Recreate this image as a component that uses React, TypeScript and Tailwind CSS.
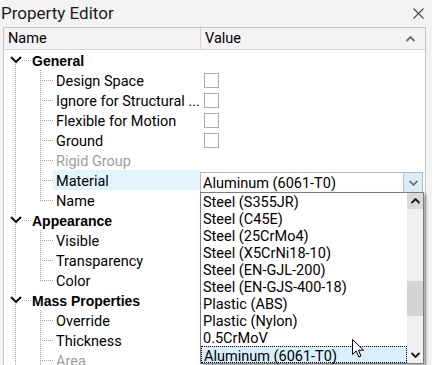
import type { ReactNode } from "react";

type Row = {
  kind: "group" | "child";
  label: string;
  first?: boolean;
  last?: boolean;
  check?: boolean;
  disabled?: boolean;
  combo?: boolean;
};

const rows: Row[] = [
  { kind: "group", label: "General", first: true },
  { kind: "child", label: "Design Space", check: true },
  { kind: "child", label: "Ignore for Structural ...", check: true },
  { kind: "child", label: "Flexible for Motion", check: true },
  { kind: "child", label: "Ground", check: true },
  { kind: "child", label: "Rigid Group", disabled: true },
  { kind: "child", label: "Material", combo: true },
  { kind: "child", label: "Name", last: true },
  { kind: "group", label: "Appearance" },
  { kind: "child", label: "Visible" },
  { kind: "child", label: "Transparency" },
  { kind: "child", label: "Color", last: true },
  { kind: "group", label: "Mass Properties" },
  { kind: "child", label: "Override" },
  { kind: "child", label: "Thickness" },
  { kind: "child", label: "Area", disabled: true },
];

const materials = [
  "Steel (S355JR)",
  "Steel (C45E)",
  "Steel (25CrMo4)",
  "Steel (X5CrNi18-10)",
  "Steel (EN-GJL-200)",
  "Steel (EN-GJS-400-18)",
  "Plastic (ABS)",
  "Plastic (Nylon)",
  "0.5CrMoV",
  "Aluminum (6061-T0)",
];

const dot = "#a3a3a3";

function GroupLines({ first }: { first?: boolean }) {
  return (
    <svg width="28" height="20" className="shrink-0" shapeRendering="crispEdges">
      {!first && <line x1="11.5" y1="0" x2="11.5" y2="6" stroke={dot} strokeDasharray="1 1" />}
      <line x1="11.5" y1="14" x2="11.5" y2="20" stroke={dot} strokeDasharray="1 1" />
      <line x1="18" y1="10.5" x2="27" y2="10.5" stroke={dot} strokeDasharray="1 1" />
      <path d="M7 7 L12 12 L17 7" fill="none" stroke="#111" strokeWidth="2" shapeRendering="geometricPrecision" />
    </svg>
  );
}

function ChildLines({ last }: { last?: boolean }) {
  return (
    <svg width="49" height="20" className="shrink-0" shapeRendering="crispEdges">
      <line x1="11.5" y1="0" x2="11.5" y2="20" stroke={dot} strokeDasharray="1 1" />
      <line x1="36.5" y1="0" x2="36.5" y2={last ? 11 : 20} stroke={dot} strokeDasharray="1 1" />
      <line x1="38" y1="10.5" x2="50" y2="10.5" stroke={dot} strokeDasharray="1 1" />
    </svg>
  );
}

function Caret({ up, color = "#222" }: { up?: boolean; color?: string }) {
  return (
    <svg width="9" height="6" viewBox="0 0 9 6">
      <path
        d={up ? "M0.5 5 L4.5 1 L8.5 5" : "M0.5 1 L4.5 5 L8.5 1"}
        fill="none"
        stroke={color}
        strokeWidth="1.8"
      />
    </svg>
  );
}

function Checkbox() {
  return <div className="h-[15px] w-[15px] border border-[#adadad] bg-white" />;
}

function Combo(): ReactNode {
  return (
    <div className="flex h-[21px] w-[223px] border border-[#b7b7b7] bg-white">
      <span className="flex-1 pl-[2px] pt-[1px] leading-[19px] text-black">Aluminum (6061-T0)</span>
      <span className="flex w-[19px] items-center justify-center border-l border-[#a6c8e6] bg-[#dcedfa]">
        <Caret color="#7a7a7a" />
      </span>
    </div>
  );
}

export default function App() {
  return (
    <div
      className="relative h-[365px] w-[432px] overflow-hidden bg-[#f3f3f3] text-[14.5px] text-black"
      style={{ fontFamily: "Roboto, 'Liberation Sans', sans-serif" }}
    >
      <div className="flex h-[27px] items-center justify-between pl-[1px] pr-[8px]">
        <span className="text-[17px] leading-none text-[#1b1b1b]">Property Editor</span>
        <svg width="11" height="11" viewBox="0 0 11 11">
          <path d="M0.5 0.5 L10.5 10.5 M10.5 0.5 L0.5 10.5" stroke="#4a4a4a" strokeWidth="1.1" />
        </svg>
      </div>

      <div className="ml-[3px] w-[423px] border-x border-t border-[#c6c6c6]">
        <div className="flex h-[22px] border-b border-[#d4d4d4] bg-[#f3f3f3]">
          <div className="flex w-[197px] items-center border-r border-[#d4d4d4] pl-[4px] pt-[1px]">Name</div>
          <div className="flex flex-1 items-center justify-between pl-[4px] pr-[10px] pt-[1px]">
            <span>Value</span>
            <Caret up color="#6b6b6b" />
          </div>
        </div>

        <div className="bg-white">
          {rows.map((row, i) => (
            <div key={i} className="flex h-[20px]">
              <div className="flex w-[196px] items-center">
                {row.kind === "group" ? (
                  <>
                    <GroupLines first={row.first} />
                    <span
                      className="pt-[3px] text-[14px] font-bold"
                      style={{ fontFamily: "'Liberation Sans', Arial, sans-serif" }}
                    >
                      {row.label}
                    </span>
                  </>
                ) : (
                  <>
                    <ChildLines last={row.last} />
                    <span
                      className={`flex h-full flex-1 items-center truncate pl-[3px] pt-[3px] ${
                        row.combo ? "bg-[#e3f4fc]" : ""
                      } ${row.disabled ? "text-[#9d9d9d]" : ""}`}
                    >
                      {row.label}
                    </span>
                  </>
                )}
              </div>
              <div className="relative flex flex-1 items-center pl-[4px]">
                {row.check && <Checkbox />}
                {row.combo && (
                  <div className="absolute left-0 top-[2px]">
                    <Combo />
                  </div>
                )}
              </div>
            </div>
          ))}
        </div>
      </div>

      {/* open dropdown */}
      <div className="absolute left-[200px] top-[192px] flex h-[172px] w-[224px] border border-[#7d7d7d] bg-white shadow-[2px_2px_3px_rgba(0,0,0,0.35)]">
        <div className="flex-1">
          {materials.map((m, i) => {
            const sel = i === materials.length - 1;
            return (
              <div
                key={m}
                className={`h-[17px] pl-[2px] pt-[1px] leading-[17px] ${
                  sel ? "border border-dotted border-black bg-[#d9effb] pl-[1px] pt-0 leading-[16px]" : ""
                }`}
              >
                {m}
              </div>
            );
          })}
        </div>
        <div className="flex w-[16px] flex-col bg-[#f0f0f0]">
          <div className="flex h-[16px] items-center justify-center bg-[#dadada]">
            <Caret up color="#111" />
          </div>
          <div className="h-[72px]" />
          <div className="h-[35px] bg-[#d4d4d4]" />
          <div className="flex-1" />
          <div className="flex h-[16px] items-center justify-center">
            <Caret color="#111" />
          </div>
        </div>
      </div>

      {/* mouse pointer */}
      <svg className="absolute left-[352px] top-[339px]" width="13" height="20" viewBox="0 0 13 20">
        <path
          d="M0.5 0.5 L0.5 15.5 L4.2 12 L6.8 18 L9 17 L6.5 11.2 L11.5 11.2 Z"
          fill="#fff"
          stroke="#000"
          strokeWidth="1"
          strokeLinejoin="round"
        />
      </svg>
    </div>
  );
}
